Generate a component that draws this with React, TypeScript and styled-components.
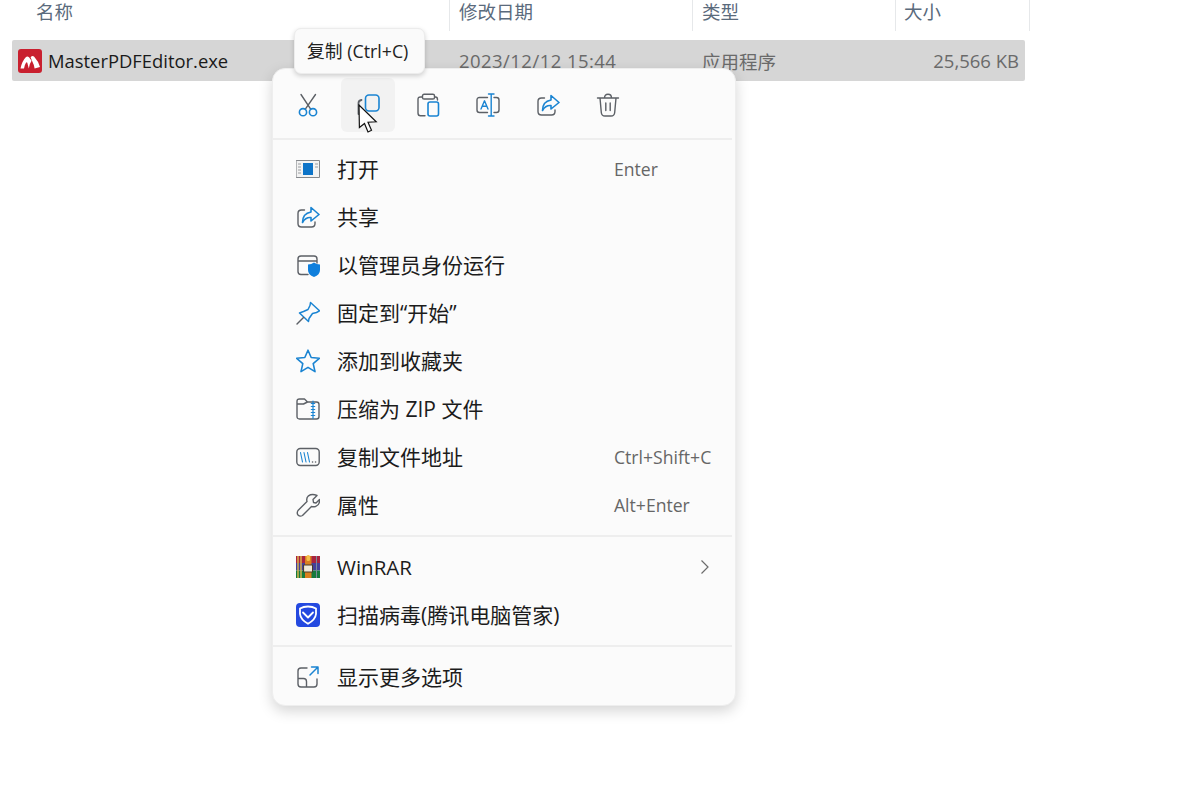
import type { FC, ReactNode } from "react";
import styled, { createGlobalStyle } from "styled-components";

const DARK = "#5c6066";
const BLUE = "#1a84d2";
const FONT = `"Open Sans", "Noto Sans CJK SC", sans-serif`;

const GlobalStyle = createGlobalStyle`
  html, body {
    margin: 0;
    background: #fff;
    overflow: hidden;
  }
  body {
    font-family: ${FONT};
  }
`;

const Icon: FC<{ children: ReactNode }> = ({ children }) => (
  <svg width={24} height={24} viewBox="0 0 24 24" fill="none" strokeWidth="1.4" strokeLinecap="round" strokeLinejoin="round">
    {children}
  </svg>
);

const AppLogo = () => (
  <Icon>
    <rect x="0" y="0" width="24" height="24" rx="3" fill="#c9202f" />
    <path d="M2.5 19.5 Q4 12 8 8 Q9.5 6.8 11 8.3 L13.6 11.8 Q11.5 14.5 10.8 19.5 L9.3 13.8 Q8.7 12.8 8 13.8 Q6.5 16 6 19.5 Z" fill="#fff" />
    <path d="M12.6 8.2 Q14.5 6 16.2 7.8 Q20.5 12.5 22 18 L16.6 19.5 Q16 15.5 13.9 11.5 Z" fill="#fff" />
  </Icon>
);

const CutIcon = () => (
  <Icon>
    <path d="M5 1.5 L14.5 15.8 M19.5 1.5 L9.5 15.8" stroke={DARK} />
    <circle cx="7" cy="19.2" r="3.6" stroke={BLUE} strokeWidth="1.6" />
    <circle cx="17" cy="19.2" r="3.6" stroke={BLUE} strokeWidth="1.6" />
  </Icon>
);

const CopyIcon = () => (
  <Icon>
    <path d="M5.5 7 Q2.5 7.5 2.5 10 V21" stroke={DARK} strokeWidth="1.8" />
    <rect x="9.5" y="2" width="13.5" height="16" rx="3.4" stroke={BLUE} strokeWidth="1.6" />
  </Icon>
);

const PasteIcon = () => (
  <Icon>
    <path d="M6 4 H4.5 Q2 4 2 6.5 V20 Q2 22.8 4.5 22.8 H9 M19 4 H19.5 Q21.5 4 21.5 6.5 V7" stroke={DARK} />
    <rect x="6.5" y="1.2" width="12" height="4.8" rx="1.6" stroke={DARK} />
    <rect x="12" y="9" width="10.5" height="14" rx="2" stroke={BLUE} strokeWidth="1.6" />
  </Icon>
);

const RenameIcon = () => (
  <Icon>
    <path d="M11.5 4.5 H3.5 Q1 4.5 1 7 V17 Q1 19.5 3.5 19.5 H11.5 M18 4.5 H20.5 Q23 4.5 23 7 V17 Q23 19.5 20.5 19.5 H18" stroke={DARK} />
    <path d="M5 16 L8.5 7.8 L12 16 M6.3 13.3 H10.7" stroke={BLUE} />
    <path d="M12.5 1 H18 M15.2 1 V23 M12.5 23 H18" stroke={BLUE} />
  </Icon>
);

const ShareIcon = () => (
  <Icon>
    <path d="M8.5 5 H5.5 Q2 5 2 8.5 V18.5 Q2 22 5.5 22 H15.5 Q19 22 19 18.5 V17" stroke={DARK} />
    <path d="M15 2.5 L23 9.5 L15 16 V12.5 Q9.5 12 6.5 17.5 Q6.5 8.5 15 7 Z" stroke={BLUE} strokeWidth="1.6" />
  </Icon>
);

const TrashIcon = () => (
  <Icon>
    <path d="M1.5 5 H22.5 M8.5 5 Q8.5 1.3 12 1.3 Q15.5 1.3 15.5 5 M4 5 L5.3 19.5 Q5.6 23 9 23 H15 Q18.4 23 18.7 19.5 L20 5" stroke={DARK} />
    <path d="M9.8 10 V17.5 M14.2 10 V17.5" stroke={DARK} />
  </Icon>
);

const OpenIcon = () => (
  <Icon>
    <rect x="0.5" y="3.5" width="23" height="17" fill="#f3f3f3" stroke="#85888c" strokeWidth="1" />
    <rect x="7" y="6" width="10" height="12" fill="#0d74c8" />
    <path d="M2 7 H5 M2 10 H5 M2 13 H5 M2 16 H5 M19 7 H22 M19 10 H22" stroke="#9a9da0" strokeWidth="1" strokeLinecap="butt" />
  </Icon>
);

const ShieldIcon = () => (
  <Icon>
    <path d="M12 21.5 H5 Q2 21.5 2 18.5 V6 Q2 3 5 3 H18 Q21 3 21 6 V10 M2 8 H21" stroke={DARK} />
    <path d="M18 9.5 Q20.5 11.5 24 11.5 V17 Q24 22 18 24 Q12 22 12 17 V11.5 Q15.5 11.5 18 9.5 Z" fill="#0f7fdc" />
  </Icon>
);

const PinIcon = () => (
  <Icon>
    <path d="M14.5 1.5 L23.5 9.8 L20.5 11.5 L16.5 12.5 L13 17.5 L12.5 20.5 L3.5 12 L7.5 10.5 L12 8.5 L14 4.5 Z" stroke={BLUE} strokeWidth="1.5" />
    <path d="M7.5 16.5 L1 23" stroke={DARK} />
  </Icon>
);

const StarIcon = () => (
  <Icon>
    <path d="M12 1.2 L15.2 8.5 L23.3 9.3 L17.2 14.6 L19 22.6 L12 18.4 L5 22.6 L6.8 14.6 L0.7 9.3 L8.8 8.5 Z" stroke={BLUE} strokeWidth="1.6" />
  </Icon>
);

const ZipIcon = () => (
  <Icon>
    <path d="M3.5 2 H8.5 L11.5 5 H20.5 Q23 5 23 7.5 V19.5 Q23 22 20.5 22 H3.5 Q1 22 1 19.5 V4.5 Q1 2 3.5 2 Z M1 7 H7.5 L11.5 5" stroke={DARK} />
    <path d="M17 4 V21.5 M15.3 6.5 H18.7 M15.3 9.5 H18.7 M15.3 12.5 H18.7 M15.3 15.5 H18.7 M15.3 18.5 H18.7" stroke={BLUE} strokeWidth="1.2" />
  </Icon>
);

const PathIcon = () => (
  <Icon>
    <rect x="0.8" y="3.5" width="22.4" height="17" rx="3.5" stroke={DARK} />
    <path d="M4.5 7.5 L6.5 17 M8 7.5 L10 17 M11.5 7.5 L13.5 17" stroke={BLUE} strokeWidth="1.1" />
    <path d="M16.5 17 H16.6 M19.5 17 H19.6" stroke={DARK} strokeWidth="1.5" />
  </Icon>
);

const WrenchIcon = () => (
  <Icon>
    <path d="M21 2.5 L17 6.5 L17.5 9.5 L20 10 L23.5 6.5 Q24 12 19.5 13.5 Q17 14 15.5 13.5 L6.5 22.5 Q4 24 2 22 Q0.5 20 2 17.5 L11 8.5 Q10 5 12.5 2.8 Q16 0.5 21 2.5 Z" stroke={DARK} />
  </Icon>
);

const WinRarIcon = () => (
  <Icon>
    <rect x="0" y="1" width="24" height="7" fill="#a8243f" />
    <rect x="0" y="8" width="24" height="7.5" fill="#44409a" />
    <rect x="0" y="15.5" width="24" height="7.5" fill="#157a3e" />
    <path d="M2 1 V23 M5 1 V23" stroke="#e0b84e" strokeWidth="1.4" strokeLinecap="butt" />
    <path d="M20.5 1 V23" stroke="#7a8a9a" strokeWidth="1" strokeLinecap="butt" />
    <rect x="9" y="1" width="6.5" height="22" fill="#d9801f" />
    <rect x="8" y="10" width="8.5" height="7" fill="#efe9d8" stroke="#4a3a28" strokeWidth="1" />
    <rect x="10.5" y="0" width="3.5" height="6" rx="1.5" fill="#f5c04a" />
  </Icon>
);

const GuardIcon = () => (
  <Icon>
    <rect x="0" y="0" width="24" height="24" rx="4" fill="#2449e0" />
    <path d="M12 3.5 Q16.5 3.5 20 5.5 V11 Q19.5 16.5 12 20.8 Q4.5 16.5 4 11 V5.5 Q7.5 3.5 12 3.5 Z" stroke="#fff" strokeWidth="1.8" />
    <path d="M7 9.5 L12 14.5 L17 9.5" stroke="#fff" strokeWidth="1.8" />
  </Icon>
);

const MoreIcon = () => (
  <Icon>
    <path d="M11 3 H5 Q2 3 2 6 V19 Q2 22 5 22 H18 Q21 22 21 19 V14 M2 13.5 H7.5 Q10.5 13.5 10.5 16.5 V22" stroke={DARK} />
    <path d="M14 10 L22 2 M15.5 2 H22 V8.5" stroke={BLUE} strokeWidth="1.5" />
  </Icon>
);

const ChevronIcon = () => (
  <svg width="10" height="16" viewBox="0 0 10 16" fill="none" stroke="#6c6c6c" strokeWidth="1.2">
    <path d="M1.5 1.5 L8 8 L1.5 14.5" />
  </svg>
);

const Cursor = () => (
  <svg width="20" height="30" viewBox="0 0 20 30">
    <path d="M1 1 L1.4 23.5 L6.5 19.5 L10 28 L13.5 26.3 L10 18.2 L18.2 17.8 Z" fill="#fff" stroke="#111" strokeWidth="1.2" strokeLinejoin="miter" />
  </svg>
);

const Page = styled.div`
  position: relative;
  width: 1201px;
  height: 788px;
  overflow: hidden;
  background: #fff;
`;

const HeaderBar = styled.div`
  display: flex;
  width: 1031px;
  height: 31px;
  color: #5a6a7c;
  font-size: 18.5px;
  line-height: 24px;
`;

const HeaderCell = styled.div<{ $w: number; $pad: number; $sep?: boolean; $end?: boolean }>`
  width: ${(p) => p.$w}px;
  padding-left: ${(p) => p.$pad}px;
  box-sizing: border-box;
  border-left: ${(p) => (p.$sep ? "1px solid #e6e8ea" : "none")};
  border-right: ${(p) => (p.$end ? "1px solid #e6e8ea" : "none")};
`;

const FileRow = styled.div`
  display: flex;
  align-items: center;
  width: 1013px;
  height: 41px;
  margin: 9px 0 0 12px;
  background: #d6d6d6;
  border-radius: 2px;
  font-size: 18.5px;
`;

const FileName = styled.div`
  display: flex;
  align-items: center;
  gap: 6px;
  width: 437px;
  padding-left: 6px;
  box-sizing: border-box;
  color: #1a1a1a;
  font-size: 18.4px;
`;

const FileCell = styled.div<{ $w: number; $right?: boolean; $spaced?: boolean }>`
  width: ${(p) => p.$w}px;
  box-sizing: border-box;
  padding-left: 10px;
  color: #6a6a6a;
  letter-spacing: ${(p) => (p.$spaced ? "0.45px" : "0")};
  text-align: ${(p) => (p.$right ? "right" : "left")};
`;

const Menu = styled.div`
  position: absolute;
  left: 272px;
  top: 68px;
  width: 464px;
  height: 638px;
  box-sizing: border-box;
  background: #fbfbfb;
  border: 1px solid #eeeeee;
  border-radius: 13px;
  box-shadow: 0 5px 14px rgba(0, 0, 0, 0.17);
`;

const Toolbar = styled.div`
  display: flex;
  gap: 6px;
  padding: 9px 0 0 8px;
  height: 60px;
`;

const ToolButton = styled.div<{ $active?: boolean }>`
  width: 54px;
  height: 54px;
  display: flex;
  align-items: center;
  justify-content: center;
  border-radius: 6px;
  background: ${(p) => (p.$active ? "#f2f2f2" : "transparent")};
`;

const Divider = styled.div`
  height: 2px;
  margin-right: 3px;
  background: #eeeeee;
`;

const Section = styled.div<{ $top: number; $bottom: number }>`
  padding: ${(p) => p.$top}px 0 ${(p) => p.$bottom}px;
`;

const Row = styled.div`
  display: flex;
  align-items: center;
  height: 48px;
  padding-left: 23px;
  color: #1c1c1c;
  font-size: 21px;
`;

const RowIcon = styled.span`
  display: flex;
  width: 24px;
  height: 24px;
  margin-right: 17px;
`;

const RowLabel = styled.span<{ $latin?: boolean }>`
  width: 277px;
  margin-bottom: ${(p) => (p.$latin ? 0 : 2)}px;
  white-space: nowrap;
  font-size: ${(p) => (p.$latin ? "20.5px" : "21px")};
`;

const Shortcut = styled.span`
  color: #666;
  font-size: 17.6px;
  white-space: nowrap;
`;

const Arrow = styled.span`
  display: flex;
  margin-left: 86px;
`;

const Tooltip = styled.div`
  position: absolute;
  left: 294px;
  top: 28px;
  width: 131px;
  height: 46px;
  box-sizing: border-box;
  padding: 0 0 2px 12px;
  display: flex;
  align-items: center;
  background: #fafafa;
  border: 1px solid #ececec;
  border-radius: 7px;
  box-shadow: 0 2px 5px rgba(0, 0, 0, 0.18);
  color: #222;
  font-size: 17.8px;
  white-space: nowrap;
`;

const CursorSpot = styled.div`
  position: absolute;
  left: 358px;
  top: 104px;
  height: 30px;
`;

type MenuEntry = { icon: ReactNode; label: string; shortcut?: string; arrow?: boolean };

const mainEntries: MenuEntry[] = [
  { icon: <OpenIcon />, label: "打开", shortcut: "Enter" },
  { icon: <ShareIcon />, label: "共享" },
  { icon: <ShieldIcon />, label: "以管理员身份运行" },
  { icon: <PinIcon />, label: "固定到“开始”" },
  { icon: <StarIcon />, label: "添加到收藏夹" },
  { icon: <ZipIcon />, label: "压缩为 ZIP 文件" },
  { icon: <PathIcon />, label: "复制文件地址", shortcut: "Ctrl+Shift+C" },
  { icon: <WrenchIcon />, label: "属性", shortcut: "Alt+Enter" },
];

const extraEntries: MenuEntry[] = [
  { icon: <WinRarIcon />, label: "WinRAR", arrow: true },
  { icon: <GuardIcon />, label: "扫描病毒(腾讯电脑管家)" },
];

const MenuRow: FC<MenuEntry> = ({ icon, label, shortcut, arrow }) => (
  <Row>
    <RowIcon>{icon}</RowIcon>
    <RowLabel $latin={arrow}>{label}</RowLabel>
    {shortcut && <Shortcut>{shortcut}</Shortcut>}
    {arrow && (
      <Arrow>
        <ChevronIcon />
      </Arrow>
    )}
  </Row>
);

const tools = [
  { key: "cut", icon: <CutIcon /> },
  { key: "copy", icon: <CopyIcon />, active: true },
  { key: "paste", icon: <PasteIcon /> },
  { key: "rename", icon: <RenameIcon /> },
  { key: "share", icon: <ShareIcon /> },
  { key: "trash", icon: <TrashIcon /> },
];

const App: FC = () => {
  return (
    <Page>
      <GlobalStyle />
      <HeaderBar>
        <HeaderCell $w={449} $pad={36}>名称</HeaderCell>
        <HeaderCell $w={243} $pad={9} $sep>修改日期</HeaderCell>
        <HeaderCell $w={203} $pad={9} $sep>类型</HeaderCell>
        <HeaderCell $w={135} $pad={8} $sep $end>大小</HeaderCell>
      </HeaderBar>
      <FileRow>
        <FileName>
          <AppLogo />
          MasterPDFEditor.exe
        </FileName>
        <FileCell $w={243} $spaced>2023/12/12 15:44</FileCell>
        <FileCell $w={203}>应用程序</FileCell>
        <FileCell $w={124} $right>25,566 KB</FileCell>
      </FileRow>

      <Menu>
        <Toolbar>
          {tools.map((t) => (
            <ToolButton key={t.key} $active={t.active}>
              {t.icon}
            </ToolButton>
          ))}
        </Toolbar>
        <Divider />
        <Section $top={5} $bottom={6}>
          {mainEntries.map((e) => (
            <MenuRow key={e.label} {...e} />
          ))}
        </Section>
        <Divider />
        <Section $top={6} $bottom={6}>
          {extraEntries.map((e) => (
            <MenuRow key={e.label} {...e} />
          ))}
        </Section>
        <Divider />
        <Section $top={6} $bottom={0}>
          <MenuRow icon={<MoreIcon />} label="显示更多选项" />
        </Section>
      </Menu>

      <Tooltip>复制 (Ctrl+C)</Tooltip>
      <CursorSpot>
        <Cursor />
      </CursorSpot>
    </Page>
  );
};

export default App;
